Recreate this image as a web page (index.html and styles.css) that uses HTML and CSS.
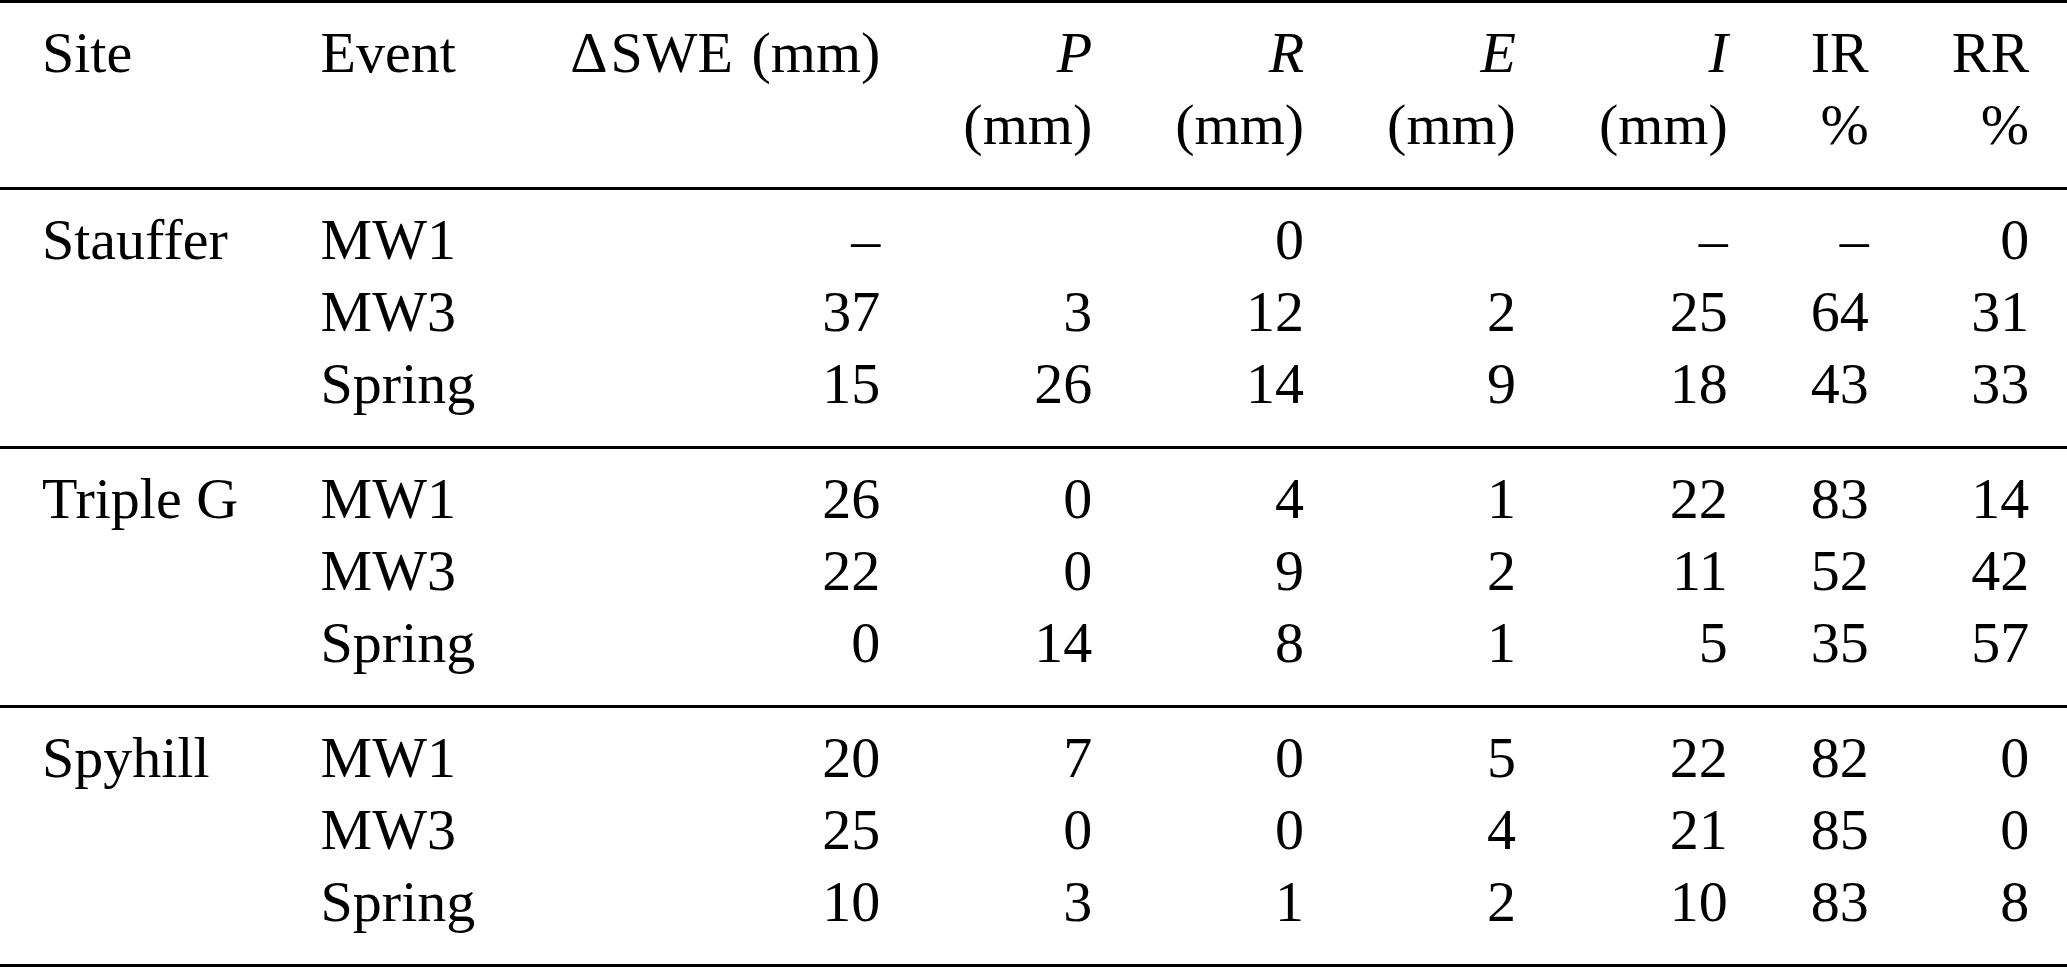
FILE: index.html
```html
<!DOCTYPE html>
<html lang="en">
<head>
    <meta charset="UTF-8">
    <meta name="viewport" content="width=device-width, initial-scale=1.0">
    <title>Water balance by site and event</title>
    <link rel="stylesheet" href="styles.css">
</head>
<body>
    <table class="balance">
        <thead>
            <tr class="first">
                <th class="txt site">Site</th>
                <th class="txt">Event</th>
                <th><span class="delta">&Delta;</span>SWE <span class="unit">(mm)</span></th>
                <th><i>P</i></th>
                <th><i>R</i></th>
                <th><i>E</i></th>
                <th><i>I</i></th>
                <th>IR</th>
                <th>RR</th>
            </tr>
            <tr class="last">
                <th class="txt site"></th>
                <th class="txt"></th>
                <th></th>
                <th>(mm)</th>
                <th>(mm)</th>
                <th>(mm)</th>
                <th>(mm)</th>
                <th>%</th>
                <th>%</th>
            </tr>
        </thead>
        <tbody>
            <tr class="first">
                <td class="txt site">Stauffer</td>
                <td class="txt">MW1</td>
                <td>&ndash;</td>
                <td></td>
                <td>0</td>
                <td></td>
                <td>&ndash;</td>
                <td>&ndash;</td>
                <td>0</td>
            </tr>
            <tr>
                <td class="txt site"></td>
                <td class="txt">MW3</td>
                <td>37</td>
                <td>3</td>
                <td>12</td>
                <td>2</td>
                <td>25</td>
                <td>64</td>
                <td>31</td>
            </tr>
            <tr class="last">
                <td class="txt site"></td>
                <td class="txt">Spring</td>
                <td>15</td>
                <td>26</td>
                <td>14</td>
                <td>9</td>
                <td>18</td>
                <td>43</td>
                <td>33</td>
            </tr>
        </tbody>
        <tbody>
            <tr class="first">
                <td class="txt site">Triple G</td>
                <td class="txt">MW1</td>
                <td>26</td>
                <td>0</td>
                <td>4</td>
                <td>1</td>
                <td>22</td>
                <td>83</td>
                <td>14</td>
            </tr>
            <tr>
                <td class="txt site"></td>
                <td class="txt">MW3</td>
                <td>22</td>
                <td>0</td>
                <td>9</td>
                <td>2</td>
                <td>11</td>
                <td>52</td>
                <td>42</td>
            </tr>
            <tr class="last">
                <td class="txt site"></td>
                <td class="txt">Spring</td>
                <td>0</td>
                <td>14</td>
                <td>8</td>
                <td>1</td>
                <td>5</td>
                <td>35</td>
                <td>57</td>
            </tr>
        </tbody>
        <tbody>
            <tr class="first">
                <td class="txt site">Spyhill</td>
                <td class="txt">MW1</td>
                <td>20</td>
                <td>7</td>
                <td>0</td>
                <td>5</td>
                <td>22</td>
                <td>82</td>
                <td>0</td>
            </tr>
            <tr>
                <td class="txt site"></td>
                <td class="txt">MW3</td>
                <td>25</td>
                <td>0</td>
                <td>0</td>
                <td>4</td>
                <td>21</td>
                <td>85</td>
                <td>0</td>
            </tr>
            <tr class="last">
                <td class="txt site"></td>
                <td class="txt">Spring</td>
                <td>10</td>
                <td>3</td>
                <td>1</td>
                <td>2</td>
                <td>10</td>
                <td>83</td>
                <td>8</td>
            </tr>
        </tbody>
    </table>
</body>
</html>
```

FILE: styles.css
```css
body {
    margin: 0;
    padding: 0;
    background-color: #ffffff;
    color: #000000;
    font-family: 'Liberation Serif', 'Times New Roman', serif;
}

.balance {
    width: 100%;
    border-collapse: separate;
    border-spacing: 0;
    font-size: 58px;
    line-height: 72px;
    border-top: 3px solid #000000;
}

.balance th,
.balance td {
    padding: 0 39.5px 0 43.5px;
    font-weight: normal;
    text-align: right;
    white-space: nowrap;
    vertical-align: top;
}

.balance .txt {
    text-align: left;
}

.balance .site {
    padding-left: 42px;
    padding-right: 39px;
}

.balance i {
    font-style: italic;
}

.delta {
    margin: 0 3px 0 12px;
}

.unit {
    margin-left: 4px;
}

.balance .first th,
.balance .first td {
    padding-top: 14px;
}

.balance .last th,
.balance .last td {
    padding-bottom: 26px;
    border-bottom: 3px solid #000000;
}
```
